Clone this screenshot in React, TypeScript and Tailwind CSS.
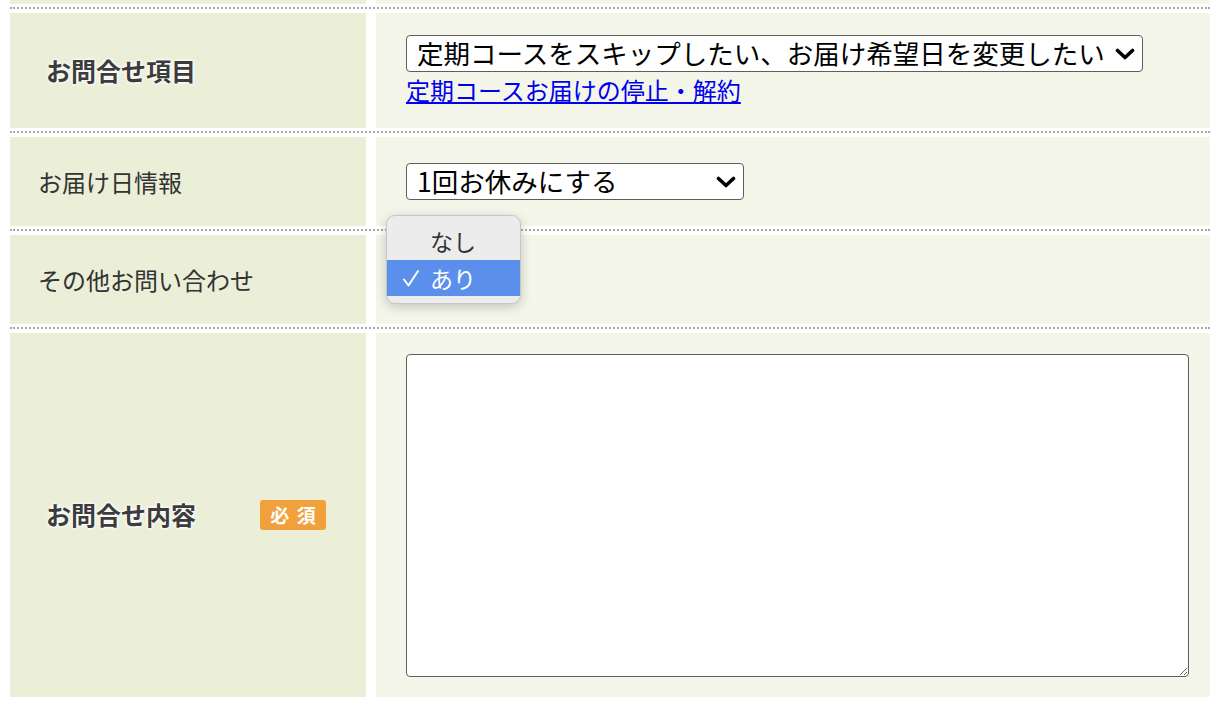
import React from 'react';

const Chevron = () => (
  <svg width="20" height="12" viewBox="0 0 20 12" className="pointer-events-none absolute right-[8px] top-1/2 -translate-y-1/2">
    <path d="M2.5 2.5l7.5 7 7.5-7" stroke="#000" strokeWidth="3.6" fill="none" strokeLinecap="round" strokeLinejoin="round" />
  </svg>
);

const Check = () => (
  <svg width="18" height="18" viewBox="0 0 18 18">
    <path d="M2 10.5l4.5 6L16 2" stroke="#fff" strokeWidth="2" fill="none" strokeLinecap="round" strokeLinejoin="round" />
  </svg>
);

const labelCell = "w-[356px] shrink-0 bg-[#ebefd7] flex items-center";
const valueCell = "flex-1 bg-[#f5f6ea] flex flex-col justify-center pl-[30px]";
const row = "flex gap-[10px] border-t-2 border-dotted border-[#a9a9a9] pt-[4px] pb-[3px]";
const imgLabel = "text-[25px] font-bold text-[#3c3c3c] [text-shadow:0_0_2px_#fff,0_0_3px_#fff,0_0_4px_#fff]";
const plainLabel = "text-[24px] text-[#333] pl-[28px]";
const selectBox = "block w-full h-[37px] appearance-none rounded-[4px] border border-[#5e5e5e] bg-white pl-[10px] pr-[36px] text-[26.5px] leading-none text-black";

export default function App() {
  return (
    <div className="min-h-screen bg-white pl-[10px] font-['Noto_Sans_CJK_JP',sans-serif]">
      {/* tail of the previous row */}
      <div className="flex gap-[10px] pb-[3px]">
        <div className="w-[356px] h-[4px] bg-[#ebefd7]" />
        <div className="flex-1 h-[4px] bg-[#f5f6ea]" />
      </div>

      <div className={row}>
        <div className={`${labelCell} h-[115px] pl-[36px]`}>
          <span className={imgLabel}>お問合せ項目</span>
        </div>
        <div className={valueCell}>
          <div className="relative w-[737px]">
            <select defaultValue="skip" className={selectBox}>
              <option value="skip">定期コースをスキップしたい、お届け希望日を変更したい</option>
            </select>
            <Chevron />
          </div>
          <a href="#" className="mt-[2px] self-start text-[24px] leading-[32px] text-[#0000ee] underline">
            定期コースお届けの停止・解約
          </a>
        </div>
      </div>

      <div className={row}>
        <div className={`${labelCell} h-[89px]`}>
          <span className={plainLabel}>お届け日情報</span>
        </div>
        <div className={valueCell}>
          <div className="relative w-[338px]">
            <select defaultValue="rest" className={selectBox}>
              <option value="rest">1回お休みにする</option>
            </select>
            <Chevron />
          </div>
        </div>
      </div>

      <div className={row}>
        <div className={`${labelCell} h-[89px]`}>
          <span className={plainLabel}>その他お問い合わせ</span>
        </div>
        <div className={`${valueCell} relative`}>
          <div className="absolute left-[10px] -top-[20px] z-10 w-[135px] rounded-[9px] border border-[#c6c6c6] bg-[#ececec] py-[7px] shadow-[0_3px_12px_rgba(0,0,0,0.2)]">
            <div className="flex h-[37px] items-center pl-[43px] text-[23px] text-[#333]">なし</div>
            <div className="flex h-[36px] items-center bg-[#5a8fec] text-[23px] text-white">
              <span className="flex w-[43px] justify-center pl-[4px]"><Check /></span>
              あり
            </div>
          </div>
        </div>
      </div>

      <div className={row}>
        <div className={`${labelCell} h-[364px] pl-[36px]`}>
          <span className={`${imgLabel} w-[214px]`}>お問合せ内容</span>
          <span className="flex h-[30px] w-[66px] items-center justify-center rounded-[3px] bg-[#f1a03c] text-[19px] font-bold tracking-[0.4em] pl-[0.4em] text-white">
            必須
          </span>
        </div>
        <div className={valueCell}>
          <textarea className="block h-[323px] w-[783px] rounded-[4px] border border-[#5e5e5e] bg-white p-[6px] text-[22px]" />
        </div>
      </div>
    </div>
  );
}
